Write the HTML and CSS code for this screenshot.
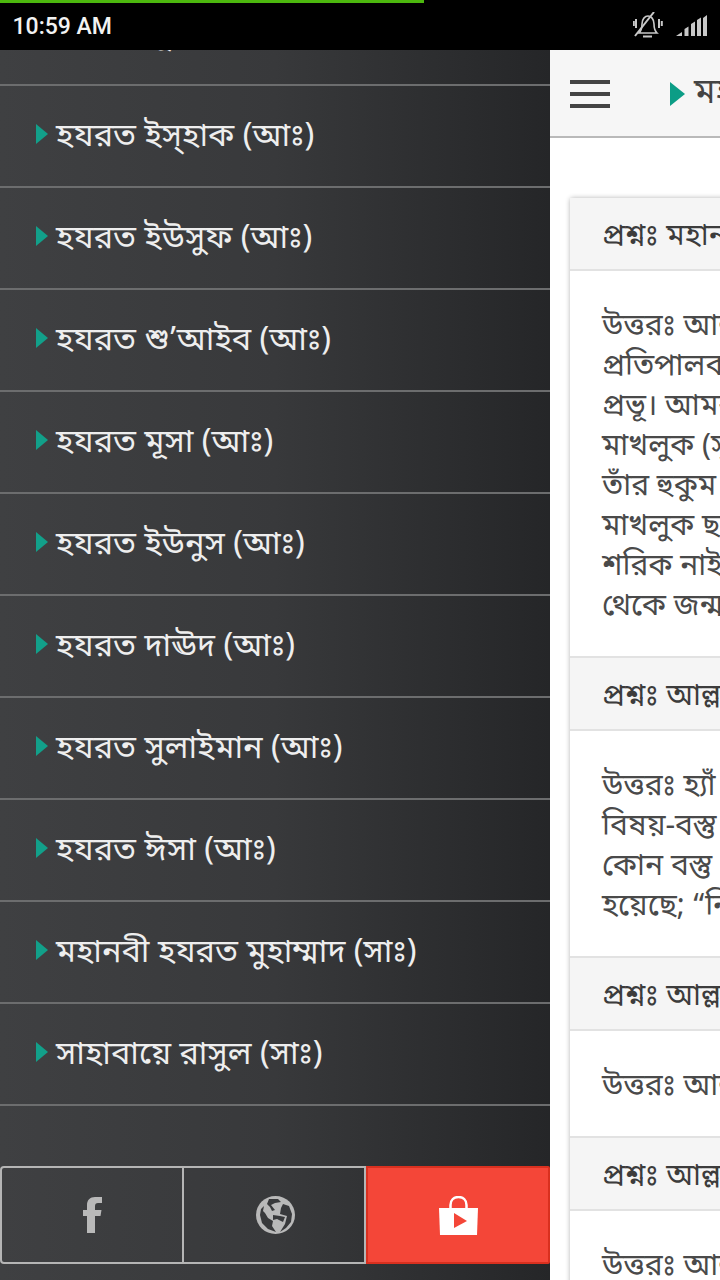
FILE: index.html
```html
<!DOCTYPE html>
<html lang="bn">
<head>
  <meta charset="UTF-8" />
  <meta name="viewport" content="width=device-width, initial-scale=1.0"/>
  <title>নবী রাসূল</title>
  <link rel="stylesheet" href="styles.css">
</head>
<body>

  <div class="progress"></div>

  <div class="statusbar">
    <span class="time">10:59 AM</span>
    <div class="status-icons">
      <svg width="30" height="26" viewBox="0 0 30 26" fill="none" stroke="#c8c8c8" stroke-width="1.600">
        <path d="M6 21c2-2 3-5 3-9 0-5 3-8 6-8s6 3 6 8c0 4 1 7 3 9z"/>
        <path d="M10 24.500h9" stroke-width="2"/>
        <path d="M21 0 2 24" stroke-width="2"/>
        <path d="M3 7v9M.8 9v5M26 7v9M28.800 9v5" stroke-width="2"/>
      </svg>
      <svg width="31" height="21" viewBox="0 0 31 21" fill="#c8c8c8">
        <path d="M0 21l6-4v4zM8.500 21v-7l4-2.500V21zM15 21V9l4-2.500V21zM21 21V5l4-2.500V21zM27 21V3l4-3v21z"/>
      </svg>
    </div>
  </div>

  <div class="screen">
    <nav class="drawer">
      <ul class="menu">
        <li>হযরত লূত (আঃ)</li>
        <li>হযরত ইস্হাক (আঃ)</li>
        <li>হযরত ইউসুফ (আঃ)</li>
        <li>হযরত শু’আইব (আঃ)</li>
        <li>হযরত মূসা (আঃ)</li>
        <li>হযরত ইউনুস (আঃ)</li>
        <li>হযরত দাঊদ (আঃ)</li>
        <li>হযরত সুলাইমান (আঃ)</li>
        <li>হযরত ঈসা (আঃ)</li>
        <li>মহানবী হযরত মুহাম্মাদ (সাঃ)</li>
        <li>সাহাবায়ে রাসুল (সাঃ)</li>
      </ul>
      <div class="social">
        <a class="social-btn">
          <svg width="19" height="36" viewBox="0 0 19 36" fill="#b9b9b9">
            <path d="M4 36V19H0v-6h4V8c0-5 3-8 8-8h7v6h-4c-2 0-3 1-3 3v4h6.500l-1 6H12v17z"/>
          </svg>
        </a>
        <a class="social-btn">
          <svg width="39" height="38" viewBox="0 0 39 38">
            <ellipse cx="19.500" cy="19" rx="19.500" ry="19" fill="#b9b9b9"/>
            <path fill="#38393b" d="M13 3h9l3 3-6 1-4 2 4 5-3 1-2-4-3-3zM9 17l3 5 5 3-1 5 4 6-8-3-6-6-2-8 1-6 3-3-1 5zM27 8l6 2 3 8-1 8-5 6-6 4 5-8 2-8-7-2 1-6zM17 19l7 1 5 1-2 5-6-3-4 1z"/>
          </svg>
        </a>
        <a class="social-btn store">
          <svg width="39" height="39" viewBox="0 0 39 39">
            <path fill="none" stroke="#fff" stroke-width="2.500" d="M11.500 13V9c0-5 3.500-8 8-8s8 3 8 8v4"/>
            <path fill="#fff" d="M0 12h39l-1 27H1z"/>
            <path fill="#f44638" d="M15 17l13 8-13 7z"/>
          </svg>
        </a>
      </div>
    </nav>

    <main class="main">
      <header class="topbar">
        <div class="burger"><span></span><span></span><span></span></div>
        <i class="arrow-big"></i>
        <span class="topbar-title">মহান আল্লাহ</span>
      </header>

      <div class="cards">
        <div class="card">
          <h3 class="q">প্রশ্নঃ মহান আল্লাহ কে?</h3>
          <div class="a">
            <p>উত্তরঃ আল্লাহ আমাদের</p>
            <p>প্রতিপালক</p>
            <p>প্রভূ। আমরা তাঁর</p>
            <p>মাখলুক (সৃষ্টি)</p>
            <p>তাঁর হুকুম মানি</p>
            <p>মাখলুক ছাড়া</p>
            <p>শরিক নাই</p>
            <p>থেকে জন্ম</p>
          </div>
        </div>
        <div class="card">
          <h3 class="q">প্রশ্নঃ আল্লাহ কি?</h3>
          <div class="a">
            <p>উত্তরঃ হ্যাঁ</p>
            <p>বিষয়-বস্তু</p>
            <p>কোন বস্তু</p>
            <p>হয়েছে; “নিশ্চয়</p>
          </div>
        </div>
        <div class="card">
          <h3 class="q">প্রশ্নঃ আল্লাহ কি?</h3>
          <div class="a">
            <p>উত্তরঃ আল্লাহ</p>
          </div>
        </div>
        <div class="card">
          <h3 class="q">প্রশ্নঃ আল্লাহ কি?</h3>
          <div class="a">
            <p>উত্তরঃ আল্লাহ</p>
          </div>
        </div>
      </div>
    </main>
  </div>

</body>
</html>
```

FILE: styles.css
```css
* {
  box-sizing: border-box;
}

html, body {
  height: 100%;
}

body {
  margin: 0;
  width: 720px;
  height: 1280px;
  overflow: hidden;
  display: flex;
  flex-direction: column;
  position: relative;
  font-family: "Noto Sans Bengali", "Noto Sans", "Lohit Bengali", "Liberation Sans", sans-serif;
  background: #fff;
}

.progress {
  position: absolute;
  top: 0;
  left: 0;
  width: 424px;
  height: 3px;
  background: #4cb80e;
}

.statusbar {
  flex: none;
  height: 50px;
  background: #000;
  display: flex;
  justify-content: space-between;
  align-items: center;
  padding: 0 13px 0 12.500px;
}

.time {
  padding-top: 2px;
  color: #f2f2f2;
  font-family: Roboto, sans-serif;
  font-weight: 500;
  font-size: 23px;
}

.status-icons {
  display: flex;
  align-items: center;
  gap: 13px;
}

.screen {
  flex: 1;
  display: flex;
  min-height: 0;
}

.drawer {
  flex: none;
  width: 550px;
  display: flex;
  flex-direction: column;
  justify-content: space-between;
  overflow: hidden;
  background: linear-gradient(to right, #3f4042 0%, #38393b 50%, #252628 100%);
}

.menu {
  list-style: none;
  margin: -66px 0 0;
  padding: 0;
}

.menu li {
  height: 102px;
  border-bottom: 2px solid #6c6d6e;
  display: flex;
  align-items: center;
  padding: 3px 0 0 36px;
  color: #eee;
  font-size: 32.500px;
}

.menu li::before {
  content: "";
  flex: none;
  width: 0;
  height: 0;
  margin: 0 8px 7px 0;
  border-left: 12px solid #12a08a;
  border-top: 10.500px solid transparent;
  border-bottom: 10.500px solid transparent;
}

.social {
  display: flex;
  height: 98px;
  margin-bottom: 16px;
}

.social-btn {
  flex: 1;
  display: flex;
  align-items: center;
  justify-content: center;
  border: 2px solid #b5b5b5;
  border-left-width: 0;
}

.social-btn:first-child {
  border-left-width: 2px;
  border-radius: 4px 0 0 4px;
}

.social-btn:nth-child(2) svg {
  margin-left: 2px;
}

.social-btn.store {
  background: #f44638;
  border: 2px solid #d9301f;
  border-radius: 0 2px 2px 0;
}

.main {
  flex: 1;
  min-width: 0;
  overflow: hidden;
}

.topbar {
  height: 88px;
  background: #f6f6f6;
  border-bottom: 2px solid #b9b9b9;
  display: flex;
  align-items: center;
  padding: 2px 0 0 20px;
  white-space: nowrap;
  color: #444;
  font-size: 35px;
}

.burger {
  flex: none;
  width: 40px;
  display: flex;
  flex-direction: column;
  gap: 8px;
  margin-right: 60px;
}

.burger span {
  height: 4px;
  background: #444;
}

.arrow-big {
  flex: none;
  width: 0;
  height: 0;
  margin-right: 9px;
  border-left: 15px solid #0c9d86;
  border-top: 12px solid transparent;
  border-bottom: 12px solid transparent;
}

.cards {
  margin: 60px 0 0 20px;
  width: 500px;
  box-shadow: 0 0 5px rgba(0, 0, 0, 0.3);
  border-radius: 3px 0 0 0;
}

.q {
  margin: 0;
  height: 73px;
  padding: 7px 0 0 32px;
  display: flex;
  align-items: center;
  background: #f5f5f5;
  border-bottom: 2px solid #e2e2e2;
  color: #3c3c3c;
  font-weight: normal;
  font-size: 30px;
  white-space: nowrap;
}

.a {
  padding: 36px 0 29px 32px;
  border-bottom: 2px solid #e2e2e2;
  color: #4a4a4a;
  font-size: 30px;
  line-height: 40px;
}

.a p {
  margin: 0;
  white-space: nowrap;
}
```
